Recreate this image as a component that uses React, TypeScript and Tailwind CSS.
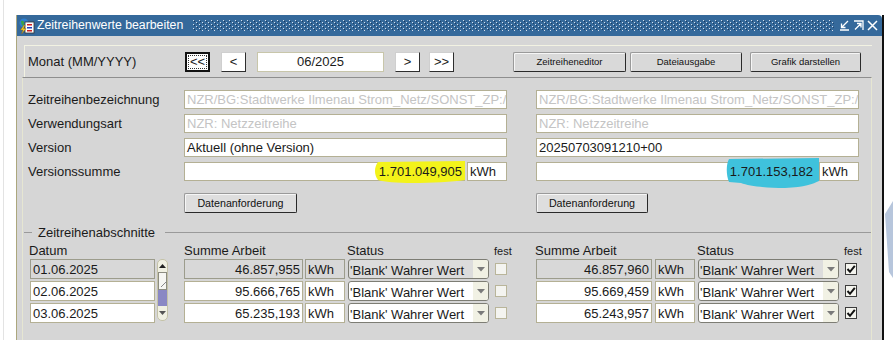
import React from "react";

const rows = [
  { date: "01.06.2025", a: "46.857,955", b: "46.857,960" },
  { date: "02.06.2025", a: "95.666,765", b: "95.669,459" },
  { date: "03.06.2025", a: "65.235,193", b: "65.243,957" },
];

const NavBtn = ({ label, focused = false }: { label: string; focused?: boolean }) =>
  focused ? (
    <div className="flex h-[20px] w-[25px] items-center justify-center border-2 border-[#111] bg-white p-[1px]">
      <div className="flex h-full w-full items-center justify-center border border-dotted border-[#333] text-[13px] leading-none">
        {label}
      </div>
    </div>
  ) : (
    <div className="flex h-[20px] w-[25px] items-center justify-center border border-[#cfcfcf] border-r-[#2e2e2e] border-b-[#2e2e2e] bg-white text-[13px] leading-none">
      {label}
    </div>
  );

const ActionBtn = ({ label, className = "" }: { label: string; className?: string }) => (
  <div
    className={`flex h-[20px] items-center justify-center rounded-[2px] border border-[#9a9a9a] border-r-[#2a2a2a] border-b-[#2a2a2a] bg-[#d9d9d9] text-[9.5px] leading-none text-[#111] shadow-[inset_1px_1px_0_#f6f6f6] ${className}`}
  >
    {label}
  </div>
);

const Input = ({ className = "", children }: { className?: string; children?: React.ReactNode }) => (
  <div
    className={`relative flex h-[19px] items-center whitespace-nowrap border border-[#b4b094] bg-white px-[2px] text-[13px] leading-none ${className}`}
  >
    {children}
  </div>
);

const Cell = ({ first, className = "", children }: { first: boolean; className?: string; children?: React.ReactNode }) => (
  <div
    className={`flex h-[20px] items-center overflow-hidden whitespace-nowrap border px-[2px] text-[13px] leading-none ${
      first ? "border-[#9c9c8c] bg-[#d8d8d8]" : "border-[#b4b094] bg-white"
    } ${className}`}
  >
    {children}
  </div>
);

const Select = ({ first }: { first: boolean }) => (
  <div
    className={`ml-[3px] flex h-[20px] w-[141px] items-center overflow-hidden rounded-[3px] border border-[#7d7d74] ${
      first ? "bg-[#dcdcdc]" : "bg-white"
    }`}
  >
    <span className="flex-1 whitespace-nowrap pl-[1px] pt-[2px] text-[13px] leading-none">'Blank' Wahrer Wert</span>
    <span className="flex h-full w-[15px] items-center justify-center bg-[#f1f1e4]">
      <svg width="8" height="5" viewBox="0 0 8 5">
        <path d="M0 0 L8 0 L4 4.5 Z" fill="#7a7a7a" />
      </svg>
    </span>
  </div>
);

const Check = ({ checked }: { checked: boolean }) =>
  checked ? (
    <div className="ml-[6px] flex h-[12px] w-[12px] items-center justify-center border border-[#3c3c3c] bg-[#f4f4ee]">
      <svg viewBox="0 0 10 10" className="h-[10px] w-[10px]">
        <path d="M1.5 5 L4 7.8 L8.8 1.8" stroke="#111" strokeWidth="2" fill="none" />
      </svg>
    </div>
  ) : (
    <div className="ml-[6px] h-[12px] w-[12px] border border-[#b9b59a] bg-[#f4f4f0]" />
  );

const WinIcon = () => (
  <svg width="16" height="16" viewBox="0 0 16 16">
    <circle cx="5" cy="5" r="4.5" fill="#2f7fd0" />
    <path d="M2 3 Q4 2 5 4 Q6 6 4 8 Q2 7 2 3 Z" fill="#3aa24a" />
    <rect x="6" y="4" width="9" height="11" fill="#fff" stroke="#333" strokeWidth="0.8" />
    <rect x="8" y="6" width="5" height="1.5" fill="#d02020" />
    <rect x="8" y="9" width="5" height="1.5" fill="#2040c0" />
    <rect x="8" y="12" width="5" height="1.5" fill="#d02020" />
    <path d="M5 7 L1.5 12 L4 12 L2.5 16 L7 10.5 L4.5 10.5 L6 7 Z" fill="#f0d020" stroke="#a06000" strokeWidth="0.4" />
  </svg>
);

const App = () => {
  return (
    <div className="relative h-[340px] w-[893px] overflow-hidden bg-white pl-[3px] font-['Liberation_Sans',Arial,sans-serif] text-[#1a1a1a]">
      <div className="flex h-full border-l border-[#e3e3e3] pl-[12px] pt-[15px]">
        {/* window */}
        <div className="flex w-[868px] flex-col border-l border-r-2 border-[#aca77e] border-r-[#111]">
          <div className="flex h-[21px] items-center rounded-tr-[4px] bg-[#35699b] pl-[2px] pr-[4px]">
            <WinIcon />
            <span className="ml-[2px] whitespace-nowrap text-[12.3px] leading-none text-white">Zeitreihenwerte bearbeiten</span>
            <svg className="ml-[10px] h-[11px] flex-1">
              <defs>
                <pattern id="dots" width="6" height="4" patternUnits="userSpaceOnUse">
                  <rect x="0" y="0" width="1" height="1" fill="#d6e0ec" />
                  <rect x="1" y="1" width="1" height="1" fill="#1d3c60" />
                  <rect x="3" y="2" width="1" height="1" fill="#d6e0ec" />
                  <rect x="4" y="3" width="1" height="1" fill="#1d3c60" />
                </pattern>
              </defs>
              <rect width="100%" height="100%" fill="url(#dots)" />
            </svg>
            <div className="ml-[5px] flex items-center gap-[3px]">
              <svg width="11" height="11" viewBox="0 0 11 11" fill="none" stroke="#fff" strokeWidth="1.3">
                <path d="M9 1 L2.5 7.5 M2.5 3.5 L2.5 7.5 L6.5 7.5 M1 10 L10 10" />
              </svg>
              <svg width="11" height="11" viewBox="0 0 11 11" fill="none" stroke="#fff" strokeWidth="1.3">
                <path d="M1 1 L10 1 L10 10 M2 9.5 L8 3.5 M4 3.5 L8 3.5 L8 7.5" />
              </svg>
              <svg width="11" height="11" viewBox="0 0 11 11" fill="none" stroke="#fff" strokeWidth="1.5">
                <path d="M1 1 L10 10 M10 1 L1 10" />
              </svg>
            </div>
          </div>

          <div className="flex flex-1 flex-col bg-[#d6d6d6] pl-[5px] pr-[10px] pt-[9px]">
            {/* toolbar */}
            <div className="ml-[2px] flex h-[32px] items-center border-l border-t border-[#f2f2e2]">
              <span className="w-[160px] pl-[3px] text-[13px] leading-none">Monat (MM/YYYY)</span>
              <NavBtn label="<<" focused />
              <div className="ml-[11px]">
                <NavBtn label="<" />
              </div>
              <div className="ml-[11px] flex h-[20px] w-[127px] items-center justify-center border border-[#c8c6aa] bg-white text-[13px] leading-none">
                06/2025
              </div>
              <div className="ml-[11px]">
                <NavBtn label=">" />
              </div>
              <div className="ml-[9px]">
                <NavBtn label=">>" />
              </div>
              <ActionBtn label="Zeitreiheneditor" className="ml-[59px] w-[113px]" />
              <ActionBtn label="Dateiausgabe" className="ml-[4px] w-[112px]" />
              <ActionBtn label="Grafik darstellen" className="ml-[8px] w-[111px]" />
            </div>

            {/* main panel */}
            <div className="flex flex-1 flex-col border-x border-t border-[#e6e6d2] border-t-[#8e8e8e] pt-[12px]">
              <div className="flex flex-col gap-[5px]">
                <div className="flex items-center">
                  <span className="w-[161px] pl-[5px] text-[13px] leading-none">Zeitreihenbezeichnung</span>
                  <Input className="w-[323px] overflow-hidden text-[#c4c4c4]">NZR/BG:Stadtwerke Ilmenau Strom_Netz/SONST_ZP:/I</Input>
                  <Input className="ml-[29px] w-[323px] overflow-hidden text-[#c4c4c4]">NZR/BG:Stadtwerke Ilmenau Strom_Netz/SONST_ZP:/I</Input>
                </div>
                <div className="flex items-center">
                  <span className="w-[161px] pl-[5px] text-[13px] leading-none">Verwendungsart</span>
                  <Input className="w-[323px] text-[#c4c4c4]">NZR: Netzzeitreihe</Input>
                  <Input className="ml-[29px] w-[323px] text-[#c4c4c4]">NZR: Netzzeitreihe</Input>
                </div>
                <div className="flex items-center">
                  <span className="w-[161px] pl-[5px] text-[13px] leading-none">Version</span>
                  <Input className="w-[323px]">Aktuell (ohne Version)</Input>
                  <Input className="ml-[29px] w-[323px]">20250703091210+00</Input>
                </div>
                <div className="flex items-center">
                  <span className="w-[161px] pl-[5px] text-[13px] leading-none">Versionssumme</span>
                  <Input className="w-[281px] justify-end">
                    <svg className="absolute left-[187px] top-[-3px]" width="93" height="23" viewBox="0 0 93 23">
                      <path d="M6 2 L93 1 L93 20 C80 22 60 23 40 23 C25 23 12 22 6 20 C2 15 2 7 6 2 Z" fill="#f3f31a" />
                    </svg>
                    <span className="relative">1.701.049,905</span>
                  </Input>
                  <Input className="ml-[2px] w-[40px]">kWh</Input>
                  <Input className="ml-[29px] w-[281px] justify-end pr-[3px]">
                    <svg className="absolute left-[188px] top-[-5px]" width="94" height="31" viewBox="0 0 94 31">
                      <path d="M4 1 L94 0 L94 23 C88 26 80 29 60 30 C40 30 24 28 16 25 L4 24 C1 17 1 6 4 1 Z" fill="#3fc2dc" />
                    </svg>
                    <span className="relative">1.701.153,182</span>
                  </Input>
                  <Input className="ml-[2px] w-[40px]">kWh</Input>
                </div>
              </div>

              <div className="mt-[12px] flex">
                <ActionBtn label="Datenanforderung" className="ml-[161px] h-[19px] w-[113px] bg-[#dedede] text-[10.7px]" />
                <ActionBtn label="Datenanforderung" className="ml-[239px] h-[19px] w-[112px] bg-[#dedede] text-[10.7px]" />
              </div>

              {/* section */}
              <div className="mt-[11px] flex h-[16px] items-center">
                <div className="ml-[1px] h-px w-[8px] bg-[#9a9a9a]" />
                <span className="ml-[6px] whitespace-nowrap text-[13px] leading-none">Zeitreihenabschnitte</span>
                <div className="ml-[10px] h-px flex-1 bg-[#9a9a9a]" />
              </div>

              <div className="mt-[3px] flex h-[15px] items-baseline text-[13px] leading-[15px]">
                <span className="w-[161px] pl-[6px]">Datum</span>
                <span className="w-[163px]">Summe Arbeit</span>
                <span className="w-[147px]">Status</span>
                <span className="w-[41px] text-[11px]">fest</span>
                <span className="w-[162px]">Summe Arbeit</span>
                <span className="w-[147px]">Status</span>
                <span className="text-[11px]">fest</span>
              </div>

              <div className="mt-[1px] flex items-start">
                <div className="ml-[7px] flex w-[125px] flex-col gap-[2px]">
                  {rows.map((r, i) => (
                    <Cell key={r.date} first={i === 0} className="w-[125px]">
                      {r.date}
                    </Cell>
                  ))}
                </div>

                {/* scrollbar */}
                <div className="ml-[2px] flex h-[62px] w-[11px] flex-col overflow-hidden rounded-[5px] border border-[#c4c2a8] bg-[#f0f0e2]">
                  <div className="flex h-[12px] items-center justify-center">
                    <svg width="7" height="4" viewBox="0 0 7 4">
                      <path d="M0 4 L7 4 L3.5 0 Z" fill="#222" />
                    </svg>
                  </div>
                  <div className="flex h-[18px] items-end justify-start border border-[#8c8c80] bg-[#f6f6f2] pb-[2px] pl-[2px]">
                    <svg width="5" height="5" viewBox="0 0 5 5">
                      <path d="M0 5 L5 0" stroke="#888" strokeWidth="1" />
                    </svg>
                  </div>
                  <div className="h-[16px] bg-[#8a88c4]" />
                  <div className="flex flex-1 items-center justify-center">
                    <svg width="7" height="4" viewBox="0 0 7 4">
                      <path d="M0 0 L7 0 L3.5 4 Z" fill="#555" />
                    </svg>
                  </div>
                </div>

                <div className="ml-[16px] flex flex-col gap-[2px]">
                  {rows.map((r, i) => (
                    <div key={r.date} className="flex h-[20px] items-center">
                      <Cell first={i === 0} className="w-[119px] justify-end">
                        {r.a}
                      </Cell>
                      <Cell first={i === 0} className="ml-[2px] w-[40px]">
                        kWh
                      </Cell>
                      <Select first={i === 0} />
                      <Check checked={false} />
                      <Cell first={i === 0} className="ml-[29px] w-[116px] justify-end">
                        {r.b}
                      </Cell>
                      <Cell first={i === 0} className="ml-[3px] w-[40px]">
                        kWh
                      </Cell>
                      <Select first={i === 0} />
                      <Check checked />
                    </div>
                  ))}
                </div>
              </div>
            </div>
          </div>
        </div>
      </div>

      {/* desktop behind the window */}
      <svg className="absolute left-[884px] top-[195px]" width="9" height="90" viewBox="0 0 9 90">
        <polygon points="9,6 1,19 5,77 9,83" fill="#b7c6dc" />
      </svg>
    </div>
  );
};

export default App;
